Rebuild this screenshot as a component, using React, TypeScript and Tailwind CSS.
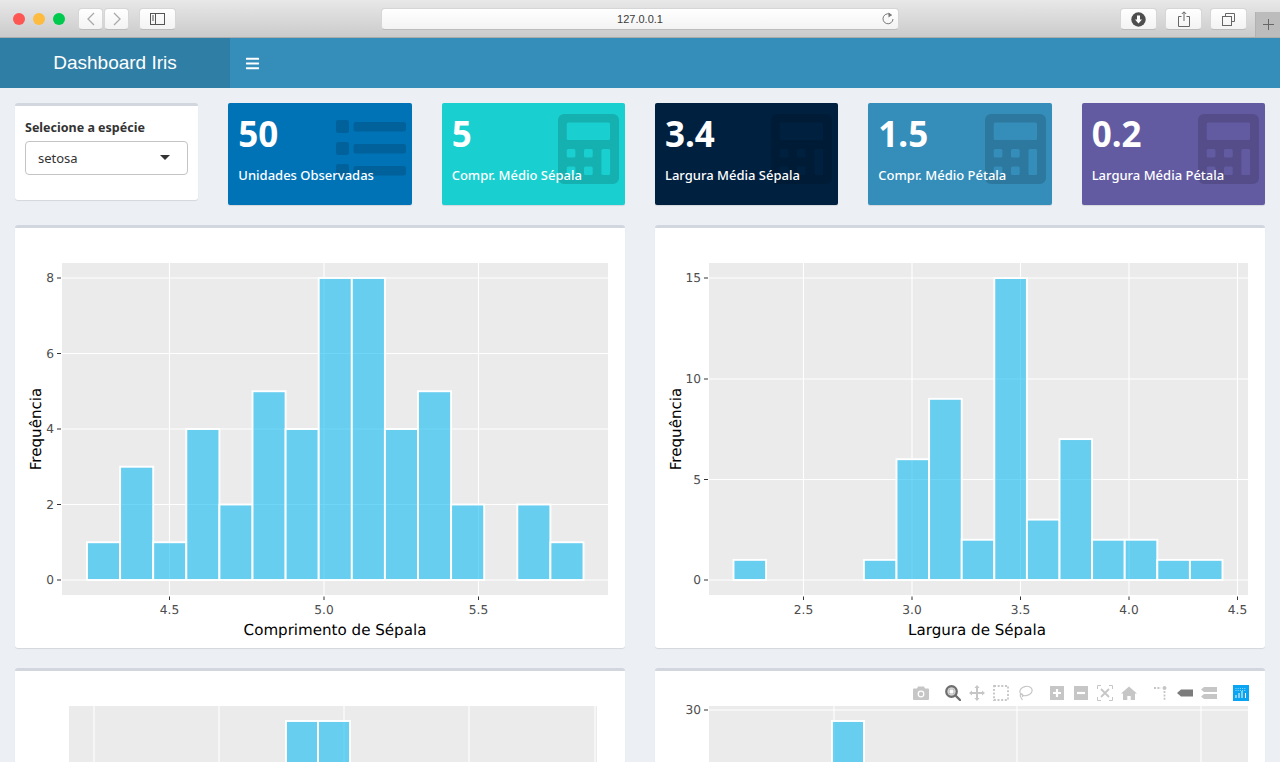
import { FaBars } from "react-icons/fa";

const rr = (x: number, y: number, w: number, h: number, r: number) =>
  `M${x + r} ${y}h${w - 2 * r}a${r} ${r} 0 0 1 ${r} ${r}v${h - 2 * r}a${r} ${r} 0 0 1 ${-r} ${r}h${-(w - 2 * r)}a${r} ${r} 0 0 1 ${-r} ${-r}v${-(h - 2 * r)}a${r} ${r} 0 0 1 ${r} ${-r}z`;

const calculatorPath = [
  rr(0, 0, 61, 70, 6),
  rr(8.7, 8.5, 43.3, 17.5, 1.5),
  rr(8.7, 35, 8.7, 8.5, 1.5),
  rr(26, 35, 8.7, 8.5, 1.5),
  rr(8.7, 52.5, 8.7, 8.5, 1.5),
  rr(26, 52.5, 8.7, 8.5, 1.5),
  rr(43.4, 35, 8.7, 26, 1.5),
].join("");

const listPath = [0, 22, 44]
  .map((y) => rr(0, y, 13, 13, 2) + rr(17.5, y + 2, 52.5, 9.5, 2))
  .join("");

function ValueBox({ value, label, color, icon }: { value: string; label: string; color: string; icon: "list" | "calc" }) {
  return (
    <div className={`relative h-[102px] overflow-hidden rounded-[2px] p-[10px] text-white shadow-[0_1px_1px_rgba(0,0,0,0.1)] ${color}`}>
      {icon === "list" ? (
        <svg viewBox="0 0 70 57" className="absolute left-[108px] top-[17px] h-[57px] w-[70px]">
          <path d={listPath} fill="#000" fillOpacity="0.15" />
        </svg>
      ) : (
        <svg viewBox="0 0 61 70" className="absolute right-[6px] top-[11px] h-[70px] w-[61px]">
          <path d={calculatorPath} fill="#000" fillOpacity="0.15" fillRule="evenodd" />
        </svg>
      )}
      <h3 className="relative mb-[10px] text-[35px] font-bold leading-[42px]">{value}</h3>
      <p className="relative mb-[10px] whitespace-nowrap text-[13px] font-medium leading-[20px]">{label}</p>
    </div>
  );
}

type ChartProps = {
  top: number;
  left: number;
  plotLeft: number;
  plotRight: number;
  plotTop: number;
  plotBottom: number;
  zero: number;
  xTicks: [string, number][];
  yTicks: [string, number][];
  bars: [number, number, number][];
  showXLabels?: boolean;
  xTitle?: string;
  xTitleAt?: number;
  yTitle?: string;
  yTitleX?: number;
};

function Chart(p: ChartProps) {
  return (
    <svg
      viewBox={`${p.left + 10} ${p.top + 13} 590 400`}
      className="block h-[400px] w-[590px] [text-rendering:geometricPrecision]"
      fontFamily="'DejaVu Sans', sans-serif"
    >
      <rect x={p.plotLeft} y={p.plotTop} width={p.plotRight - p.plotLeft} height={p.plotBottom - p.plotTop} fill="#ebebeb" />
      {p.xTicks.map(([t, x]) => (
        <g key={t}>
          <line x1={x} x2={x} y1={p.plotTop} y2={p.plotBottom} stroke="#fff" strokeWidth="1.1" />
          {p.showXLabels && (
            <>
              <line x1={x} x2={x} y1={p.plotBottom + 1.5} y2={p.plotBottom + 5} stroke="#333" strokeWidth="1" />
              <text x={x} y={p.plotBottom + 19} textAnchor="middle" fontSize="12.2" fill="#4d4d4d">{t}</text>
            </>
          )}
        </g>
      ))}
      {p.yTicks.map(([t, y]) => (
        <g key={t}>
          <line x1={p.plotLeft} x2={p.plotRight} y1={y} y2={y} stroke="#fff" strokeWidth="1.1" />
          <line x1={p.plotLeft - 5} x2={p.plotLeft - 1} y1={y} y2={y} stroke="#333" strokeWidth="1" />
          <text x={p.plotLeft - 8} y={y + 4.4} textAnchor="end" fontSize="12.2" fill="#4d4d4d">{t}</text>
        </g>
      ))}
      {p.bars.map(([x, w, y], i) => (
        <rect key={i} x={x} y={y} width={w} height={p.zero - y} fill="#11bbf3" fillOpacity="0.6" stroke="#fff" strokeWidth="1.9" />
      ))}
      {p.xTitle && (
        <text x={p.xTitleAt} y={635} textAnchor="middle" fontSize="15.1" fill="#000">{p.xTitle}</text>
      )}
      {p.yTitle && (
        <text transform={`translate(${p.yTitleX} 429) rotate(-90)`} textAnchor="middle" fontSize="15.1" fill="#000">{p.yTitle}</text>
      )}
    </svg>
  );
}

const makeBars = (start: number, width: number, zero: number, unit: number, values: number[]) =>
  values
    .map((v, i) => [start + i * width, width, zero - v * unit] as [number, number, number])
    .filter((_, i) => values[i] > 0);

const sepalLengthBars = makeBars(87, 33.1, 580, 37.75, [1, 3, 1, 4, 2, 5, 4, 8, 8, 4, 5, 2, 0, 2, 1]);
const sepalWidthBars = makeBars(733.5, 32.6, 580, 20.13, [1, 0, 0, 0, 1, 6, 9, 2, 15, 3, 7, 2, 2, 1, 1]);

function ToolIcon({ children, ml }: { children: React.ReactNode; ml?: boolean }) {
  return (
    <svg viewBox="0 0 16 16" className={`h-4 w-4 ${ml ? "ml-4" : "ml-2"}`}>
      {children}
    </svg>
  );
}

function ModeBar() {
  const c = "#c6c6c6";
  return (
    <div className="absolute left-[250px] top-[14px] flex">
      <ToolIcon>
        <path fill={c} d="M0 4.5q0-1 1-1h3l1-2h6l1 2h3q1 0 1 1V14q0 1-1 1H1q-1 0-1-1z" />
        <circle cx="8" cy="9" r="3.4" fill="#fff" />
        <circle cx="8" cy="9" r="2.2" fill={c} />
      </ToolIcon>
      <ToolIcon ml>
        <circle cx="6.5" cy="6.5" r="5.2" fill="none" stroke="#6e6e6e" strokeWidth="2.4" />
        <rect x="4" y="4" width="5" height="5" fill="#fff" stroke="#6e6e6e" strokeWidth="0.6" />
        <path d="M10.5 10.5 15 15" stroke="#6e6e6e" strokeWidth="2.4" strokeLinecap="round" />
      </ToolIcon>
      <ToolIcon>
        <path fill={c} d="M8 0l2.6 3H9v4h4V5.4L16 8l-3 2.6V9H9v4h1.6L8 16l-2.6-3H7V9H3v1.6L0 8l3-2.6V7h4V3H5.4z" />
      </ToolIcon>
      <ToolIcon>
        <path fill="none" stroke={c} strokeWidth="1.8" strokeDasharray="2 1.65" d="M1 1h14v14H1z" />
      </ToolIcon>
      <ToolIcon>
        <ellipse cx="9" cy="6" rx="6.2" ry="4.6" fill="none" stroke={c} strokeWidth="1.2" transform="rotate(-15 9 6)" />
        <path d="M3.5 9C2.5 11 4 13 5.5 15M3.5 9c2-.5 3 1.5 1.8 3" fill="none" stroke={c} strokeWidth="1.2" />
      </ToolIcon>
      <ToolIcon ml>
        <rect x="1" y="1" width="14" height="14" fill={c} />
        <path d="M4 8h8M8 4v8" stroke="#fff" strokeWidth="2.2" />
      </ToolIcon>
      <ToolIcon>
        <rect x="1" y="1" width="14" height="14" fill={c} />
        <path d="M4 8h8" stroke="#fff" strokeWidth="2.2" />
      </ToolIcon>
      <ToolIcon>
        <path fill="none" stroke={c} strokeWidth="1" d="M.5 4V.5H4M12 .5h3.5V4M15.5 12v3.5H12M4 15.5H.5V12" />
        <path fill="none" stroke={c} strokeWidth="1.8" d="M4 4l8 8M12 4l-8 8" />
      </ToolIcon>
      <ToolIcon>
        <path fill={c} d="M8 1.5 16 8.5h-2V15H9.7v-4H6.3v4H2V8.5H0z" />
      </ToolIcon>
      <ToolIcon ml>
        <circle cx="11.5" cy="3" r="2" fill={c} />
        <path d="M1 3h7M11.5 6v9" stroke={c} strokeWidth="1.8" strokeDasharray="2 1.4" fill="none" />
      </ToolIcon>
      <ToolIcon>
        <path fill="#7c7c7c" d="M0 8l4-3.5h12v7H4z" />
      </ToolIcon>
      <ToolIcon>
        <path fill={c} d="M0 4.5 3 2h13v5H3zM0 11.500 3 9h13v5H3z" />
      </ToolIcon>
      <ToolIcon ml>
        <rect width="16" height="16" fill="#0aa5f2" />
        <path d="M3 10v3M6 8v5M9 6v7M12.500 8v5" stroke="#fff" strokeWidth="1" />
        <path d="M2.500 3.500h11M2.500 5.500h11" stroke="#8fdcff" strokeWidth="1" strokeDasharray="1 1.2" />
      </ToolIcon>
    </div>
  );
}

const chromeButton = "flex h-[22px] items-center justify-center rounded-[4px] border border-[#d6d6d6] border-b-[#bcbcbc] bg-gradient-to-b from-[#ffffff] to-[#f3f3f3]";

function BrowserBar() {
  return (
    <div className="relative flex h-[38px] items-start border-b border-[#ababab] bg-gradient-to-b from-[#e8e8e8] to-[#cbcbcb] pt-2 font-['Liberation_Sans',sans-serif]">
      <div className="ml-[13px] mt-[5px] flex gap-2">
        <span className="h-3 w-3 rounded-full bg-[#fc5753]" />
        <span className="h-3 w-3 rounded-full bg-[#fdbc40]" />
        <span className="h-3 w-3 rounded-full bg-[#00ca4e]" />
      </div>
      <div className="ml-[13px] flex gap-px">
        <div className={`${chromeButton} w-[25px]`}>
          <svg viewBox="0 0 10 14" className="h-[14px] w-[10px]"><path d="M8 1 2 7l6 6" fill="none" stroke="#a9a9a9" strokeWidth="1.3" /></svg>
        </div>
        <div className={`${chromeButton} w-[25px]`}>
          <svg viewBox="0 0 10 14" className="h-[14px] w-[10px]"><path d="m2 1 6 6-6 6" fill="none" stroke="#a9a9a9" strokeWidth="1.3" /></svg>
        </div>
      </div>
      <div className={`${chromeButton} ml-[10px] w-[37px]`}>
        <svg viewBox="0 0 15 12" className="h-3 w-[15px]">
          <rect x="0.5" y="0.500" width="14" height="11" fill="none" stroke="#555" />
          <path d="M5.500 0.500v11M2 3h2M2 5h2M2 7h2" stroke="#555" fill="none" />
        </svg>
      </div>
      <div className={`${chromeButton} relative ml-[205px] w-[518px] text-[11px] text-[#3a3a3a]`}>
        127.0.0.1
        <svg viewBox="0 0 14 14" className="absolute right-[3px] top-[3px] h-[14px] w-[14px]">
          <path d="M10.500 3.200A5 5 0 1 0 12 7" fill="none" stroke="#777" strokeWidth="1" />
          <path d="M7.500 0.500 11 3l-3.500 2.500z" fill="#777" />
        </svg>
      </div>
      <div className={`${chromeButton} ml-[221px] w-[37px]`}>
        <svg viewBox="0 0 15 15" className="h-[15px] w-[15px]">
          <circle cx="7.500" cy="7.500" r="7.200" fill="#4e4e4e" />
          <path d="M6 3.500h3v4h2L7.500 11.500 4 7.500h2z" fill="#fff" />
        </svg>
      </div>
      <div className={`${chromeButton} ml-2 w-[37px]`}>
        <svg viewBox="0 0 12 16" className="h-4 w-3">
          <path d="M3.500 5.500H.5v10h11v-10h-3M6 10V1M3.800 3 6 .8 8.200 3" fill="none" stroke="#666" />
        </svg>
      </div>
      <div className={`${chromeButton} ml-2 w-[37px]`}>
        <svg viewBox="0 0 13 13" className="h-[13px] w-[13px]">
          <path d="M3.500 3V.5h9v8H10" fill="none" stroke="#666" />
          <rect x="0.500" y="3.500" width="9" height="9" fill="none" stroke="#666" />
        </svg>
      </div>
      <div className="absolute bottom-0 right-0 flex h-[25px] w-[25px] items-center justify-center border-l border-[#b2b2b2] bg-[#bcbcbc]">
        <svg viewBox="0 0 11 11" className="h-[11px] w-[11px]">
          <path d="M5.500 0v11M0 5.500h11" stroke="#666" strokeWidth="1" />
        </svg>
      </div>
    </div>
  );
}

export default function App() {
  return (
    <div className="h-[762px] w-[1280px] overflow-hidden bg-[#ecf0f5] font-['Noto_Sans',sans-serif]">
      <BrowserBar />
      <header className="flex h-[50px] bg-[#358dba] text-white">
        <div className="flex w-[230px] items-center justify-center bg-[#2f7ea5] font-['Liberation_Sans',sans-serif] text-[19px]">
          Dashboard Iris
        </div>
        <div className="flex items-center pl-[14.5px]">
          <FaBars className="text-[15px]" />
        </div>
      </header>

      <main className="flex flex-col gap-5 p-[15px]">
        <div className="grid grid-cols-6 items-start gap-[30px]">
          <div className="h-[97px] rounded-[3px] border-t-[3px] border-[#d2d6de] bg-white p-[10px] shadow-[0_1px_1px_rgba(0,0,0,0.1)]">
            <label className="mb-[2px] block whitespace-nowrap text-[12.500px] font-bold leading-[23px] text-[#333]">Selecione a espécie</label>
            <div className="relative flex h-[34px] items-center rounded-[4px] border border-[#c4c4c4] pl-3 pt-px text-[13px] text-[#333]">
              setosa
              <span className="absolute right-[17px] top-[13px] h-0 w-0 border-x-[5px] border-t-[5px] border-x-transparent border-t-[#333]" />
            </div>
          </div>
          <ValueBox value="50" label="Unidades Observadas" color="bg-[#0073b7]" icon="list" />
          <ValueBox value="5" label="Compr. Médio Sépala" color="bg-[#19cfcf]" icon="calc" />
          <ValueBox value="3.4" label="Largura Média Sépala" color="bg-[#00203f]" icon="calc" />
          <ValueBox value="1.5" label="Compr. Médio Pétala" color="bg-[#358dba]" icon="calc" />
          <ValueBox value="0.2" label="Largura Média Pétala" color="bg-[#635ba2]" icon="calc" />
        </div>

        <div className="grid grid-cols-2 gap-[30px]">
          <div className="h-[423px] rounded-[3px] border-t-[3px] border-[#d2d6de] bg-white p-[10px] shadow-[0_1px_1px_rgba(0,0,0,0.1)]">
            <Chart
              left={15}
              top={225}
              plotLeft={62}
              plotRight={608}
              plotTop={263}
              plotBottom={595}
              zero={580}
              xTicks={[["4.5", 169.5], ["5.0", 324], ["5.5", 478.5]]}
              yTicks={[["0", 580], ["2", 504.5], ["4", 429], ["6", 353.5], ["8", 278]]}
              bars={sepalLengthBars}
              showXLabels
              xTitle="Comprimento de Sépala"
              xTitleAt={335}
              yTitle="Frequência"
              yTitleX={40.5}
            />
          </div>
          <div className="h-[423px] rounded-[3px] border-t-[3px] border-[#d2d6de] bg-white p-[10px] shadow-[0_1px_1px_rgba(0,0,0,0.1)]">
            <Chart
              left={655}
              top={225}
              plotLeft={709}
              plotRight={1248}
              plotTop={263}
              plotBottom={595}
              zero={580}
              xTicks={[["2.5", 803.5], ["3.0", 912], ["3.5", 1020.5], ["4.0", 1129], ["4.5", 1237.5]]}
              yTicks={[["0", 580], ["5", 479.5], ["10", 379], ["15", 278]]}
              bars={sepalWidthBars}
              showXLabels
              xTitle="Largura de Sépala"
              xTitleAt={977}
              yTitle="Frequência"
              yTitleX={680.5}
            />
          </div>
        </div>

        <div className="grid grid-cols-2 gap-[30px]">
          <div className="h-[423px] rounded-[3px] border-t-[3px] border-[#d2d6de] bg-white p-[10px] shadow-[0_1px_1px_rgba(0,0,0,0.1)]">
            <Chart
              left={15}
              top={668}
              plotLeft={69}
              plotRight={597}
              plotTop={706}
              plotBottom={1038}
              zero={1023}
              xTicks={[["1.0", 94], ["1.2", 219], ["1.4", 344], ["1.6", 469], ["1.8", 595]]}
              yTicks={[]}
              bars={[[286, 32, 721], [318, 32, 721]]}
            />
          </div>
          <div className="relative h-[423px] rounded-[3px] border-t-[3px] border-[#d2d6de] bg-white p-[10px] shadow-[0_1px_1px_rgba(0,0,0,0.1)]">
            <Chart
              left={655}
              top={668}
              plotLeft={709}
              plotRight={1248}
              plotTop={706}
              plotBottom={1038}
              zero={1023}
              xTicks={[["0.2", 834], ["0.4", 1017], ["0.6", 1201]]}
              yTicks={[["30", 710]]}
              bars={[[832, 32, 721]]}
            />
            <ModeBar />
          </div>
        </div>
      </main>
    </div>
  );
}
